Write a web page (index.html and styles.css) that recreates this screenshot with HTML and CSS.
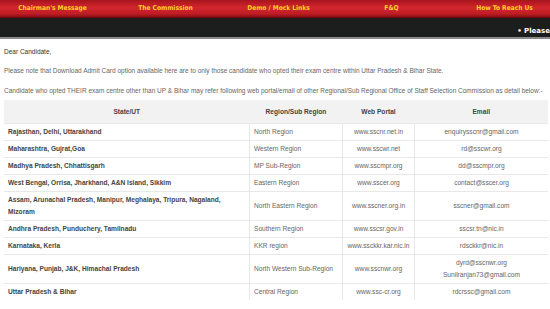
FILE: index.html
```html
<!DOCTYPE html>
<html lang="en">
<head>
  <meta charset="UTF-8">
  <title>Admit Card - Staff Selection Commission</title>
  <link rel="stylesheet" href="styles.css">
</head>
<body>
  <div class="menu">
    <a href="#">Chairman's Message</a>
    <a href="#">The Commission</a>
    <a href="#">Demo / Mock Links</a>
    <a href="#">F&amp;Q</a>
    <a href="#">How To Reach Us</a>
  </div>
  <div class="ticker">
    <span>&bull; Please</span>
  </div>

  <div class="content">
    <p class="dear">Dear Candidate,</p>
    <p>Please note that Download Admit Card option available here are to only those candidate who opted their exam centre within Uttar Pradesh &amp; Bihar State.</p>
    <p class="intro">Candidate who opted THEIR exam centre other than UP &amp; Bihar may refer following web portal/email of other Regional/Sub Regional Office of Staff Selection Commission as detail below:-</p>

    <table class="regions">
      <tr>
        <th>State/UT</th>
        <th>Region/Sub Region</th>
        <th>Web Portal</th>
        <th>Email</th>
      </tr>
      <tr>
        <td>Rajasthan, Delhi, Uttarakhand</td>
        <td>North Region</td>
        <td>www.sscnr.net.in</td>
        <td>enquirysscnr@gmail.com</td>
      </tr>
      <tr>
        <td>Maharashtra, Gujrat,Goa</td>
        <td>Western Region</td>
        <td>www.sscwr.net</td>
        <td>rd@sscwr.org</td>
      </tr>
      <tr>
        <td>Madhya Pradesh, Chhattisgarh</td>
        <td>MP Sub-Region</td>
        <td>www.sscmpr.org</td>
        <td>dd@sscmpr.org</td>
      </tr>
      <tr>
        <td>West Bengal, Orrisa, Jharkhand, A&amp;N Island, Sikkim</td>
        <td>Eastern Region</td>
        <td>www.sscer.org</td>
        <td>contact@sscer.org</td>
      </tr>
      <tr>
        <td>Assam, Arunachal Pradesh, Manipur, Meghalaya, Tripura, Nagaland,<br>Mizoram</td>
        <td>North Eastern Region</td>
        <td>www.sscner.org.in</td>
        <td>sscner@gmail.com</td>
      </tr>
      <tr>
        <td>Andhra Pradesh, Punduchery, Tamilnadu</td>
        <td>Southern Region</td>
        <td>www.sscsr.gov.in</td>
        <td>sscsr.tn@nic.in</td>
      </tr>
      <tr>
        <td>Karnataka, Kerla</td>
        <td>KKR region</td>
        <td>www.ssckkr.kar.nic.in</td>
        <td>rdsckkr@nic.in</td>
      </tr>
      <tr>
        <td>Hariyana, Punjab, J&amp;K, Himachal Pradesh</td>
        <td>North Western Sub-Region</td>
        <td>www.sscnwr.org</td>
        <td>dyrd@sscnwr.org<br>Sunilranjan73@gmail.com</td>
      </tr>
      <tr>
        <td>Uttar Pradesh &amp; Bihar</td>
        <td>Central Region</td>
        <td>www.ssc-cr.org</td>
        <td>rdcrssc@gmail.com</td>
      </tr>
    </table>
  </div>
</body>
</html>
```

FILE: styles.css
```css
body {
  margin: 0;
  font-family: "Liberation Sans", Arial, sans-serif;
  background: #ffffff;
  color: #555;
}
.menu {
  display: grid;
  grid-template-columns: repeat(5, 113px);
  height: 17px;
  margin-left: -4px;
  background: linear-gradient(#a8141c, #d3262f 45%, #c01d25 80%, #8c0f15);
  border-bottom: 1px solid #6a0a0e;
}
.menu a {
  text-align: center;
  line-height: 17px;
  font-family: "DejaVu Sans Condensed", "DejaVu Sans", sans-serif;
  font-weight: bold;
  font-size: 6.6px;
  color: #ffd21f;
  text-decoration: none;
}
.ticker {
  height: 19px;
  background: #1c1d1d;
  border-bottom: 2px solid #8a8a8a;
  text-align: right;
  line-height: 19px;
}
.ticker span {
  font-family: "DejaVu Sans", sans-serif;
  font-weight: bold;
  font-size: 7px;
  color: #ffffff;
}
.content {
  padding: 9px 2px 0 4px;
  font-size: 6.5px;
}
.content p {
  margin: 0 0 13px;
  line-height: 7px;
  color: #666;
  white-space: nowrap;
}
.content .dear {
  margin-bottom: 12px;
  color: #333;
}
.content .intro {
  margin-bottom: 6px;
}
.regions {
  width: 100%;
  border-collapse: collapse;
  font-size: 6.6px;
}
.regions th {
  background: #f2f2f2;
  color: #444;
  font-weight: bold;
  height: 23px;
  padding: 0 4px;
  text-align: center;
}
.regions td {
  border-top: 1px solid #e8e8e8;
  border-left: 1px solid #e8e8e8;
  padding: 2px 4px;
  line-height: 12px;
  color: #666;
  text-align: center;
}
.regions td:first-child {
  border-left: none;
  text-align: left;
  font-weight: bold;
  color: #444;
  width: 237px;
}
.regions td:nth-child(2) {
  text-align: left;
  width: 84px;
}
.regions td:nth-child(3) {
  width: 63px;
}
```
